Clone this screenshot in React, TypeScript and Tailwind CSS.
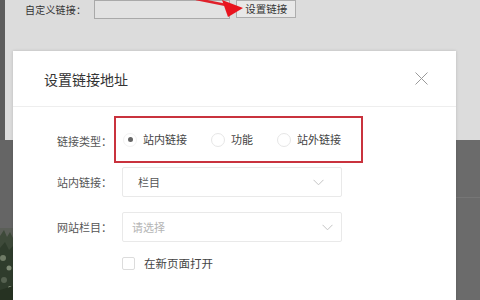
import React from "react";

const font = { fontFamily: '"Noto Sans CJK SC", "Noto Sans", sans-serif' };

function Chevron() {
  return (
    <svg width="11" height="7" viewBox="0 0 11 7" fill="none">
      <path d="M0.5 0.8 L5.5 5.8 L10.5 0.8" stroke="#c4c4c4" strokeWidth="1" />
    </svg>
  );
}

function Radio({ checked, label }: { checked?: boolean; label: string }) {
  return (
    <div className="flex items-center gap-[6px]">
      <span
        className={
          "flex h-[14px] w-[14px] items-center justify-center rounded-full border " +
          (checked ? "border-[#f2f2f2]" : "border-[#e6e6e6]")
        }
      >
        {checked && <span className="h-[5px] w-[5px] rounded-full bg-[#666]" />}
      </span>
      <span className="text-[11px] leading-none text-[#444]">{label}</span>
    </div>
  );
}

function Trees() {
  return (
    <svg width="13" height="72" viewBox="0 0 13 72" className="block">
      <rect width="13" height="72" fill="#5b5f58" />
      <path d="M0 8 L4 2 L7 9 L10 4 L13 10 L13 72 L0 72 Z" fill="#3e4a3a" />
      <path d="M0 20 L5 14 L9 22 L13 18 L13 72 L0 72 Z" fill="#2f3c2c" />
      <circle cx="3" cy="30" r="3" fill="#6f7b66" />
      <circle cx="9" cy="40" r="2.5" fill="#7c8873" />
      <circle cx="4" cy="52" r="3" fill="#556150" />
      <circle cx="10" cy="60" r="2" fill="#8a9580" />
      <path d="M0 62 L13 58 L13 72 L0 72 Z" fill="#263222" />
    </svg>
  );
}

export default function App() {
  return (
    <div className="relative h-[300px] w-[480px] overflow-hidden bg-[#6a6a6a]" style={font}>
      {/* background page */}
      <div className="flex h-[140px]">
        <div className="w-[5px] bg-[#5d5d5d]" />
        <div className="relative flex-1 bg-[#dcdcdc]">
          <div className="flex items-start pl-[20px]">
            <span className="mt-[3px] text-[10px] leading-[14px] tracking-[0.2px] text-[#333]">自定义链接：</span>
            <div className="ml-[8px] h-[19px] w-[136px] border border-[#a9a9a9] bg-[#e2e2e2]" />
            <div className="ml-[6px] flex h-[18px] w-[60px] items-center justify-center border border-[#adadad] bg-[#e8e8e8] text-[10.5px] leading-none text-[#333]">
              设置链接
            </div>
          </div>
        </div>
      </div>
      <div className="flex h-[160px]">
        <div className="flex w-[13px] flex-col justify-end bg-[#656565]">
          <Trees />
        </div>
        <div className="flex-1" />
        <div className="w-[24px] bg-[#6b6b6b] pt-[57px]">
          <div className="h-px bg-[#767676]" />
        </div>
      </div>

      {/* red arrow */}
      <svg className="absolute left-0 top-0" width="480" height="30" viewBox="0 0 480 30">
        <path d="M196 -1 L226 5" stroke="#e0202a" strokeWidth="2.5" />
        <path d="M222 0 L243 8 L228 17 Z" fill="#e8141e" />
      </svg>

      {/* modal */}
      <div className="absolute left-[13px] top-[51px] h-[270px] w-[443px] bg-white shadow-[0_0_3px_rgba(0,0,0,0.15)]">
        <div className="flex h-[56px] items-center justify-between border-b border-[#eeeeee] pl-[31px] pr-[28px]">
          <span className="text-[14px] leading-none text-[#333]">设置链接地址</span>
          <svg width="13" height="13" viewBox="0 0 13 13">
            <path d="M0.5 0.5 L12.5 12.5 M12.5 0.5 L0.5 12.5" stroke="#9a9a9a" strokeWidth="1" />
          </svg>
        </div>
        <div className="flex flex-col pt-[9px]">
          <div className="flex items-center">
            <span className="w-[99px] pt-[4px] text-right text-[11px] leading-none text-[#555]">链接类型：</span>
            <div className="ml-[2px] flex h-[47px] w-[249px] items-center gap-[24px] border-2 border-[#c9323d] pl-[7px]">
              <Radio checked label="站内链接" />
              <Radio label="功能" />
              <Radio label="站外链接" />
            </div>
          </div>
          <div className="mt-[4px] flex items-center">
            <span className="w-[99px] text-right text-[11px] leading-none text-[#555]">站内链接：</span>
            <div className="ml-[10px] flex h-[30px] w-[220px] items-center justify-between rounded-[2px] border border-[#e9e9e9] pl-[15px] pr-[17px]">
              <span className="text-[11px] leading-none text-[#555]">栏目</span>
              <Chevron />
            </div>
          </div>
          <div className="mt-[15px] flex items-center">
            <span className="w-[99px] text-right text-[11px] leading-none text-[#555]">网站栏目：</span>
            <div className="ml-[10px] flex h-[30px] w-[220px] items-center justify-between rounded-[2px] border border-[#e9e9e9] pl-[9px] pr-[8px]">
              <span className="text-[11px] leading-none text-[#b5b5b5]">请选择</span>
              <Chevron />
            </div>
          </div>
          <div className="mt-[15px] flex items-center pl-[109px]">
            <span className="h-[13px] w-[13px] rounded-[2px] border border-[#dcdcdc]" />
            <span className="ml-[9px] text-[11.5px] leading-none text-[#444]">在新页面打开</span>
          </div>
        </div>
      </div>
    </div>
  );
}
